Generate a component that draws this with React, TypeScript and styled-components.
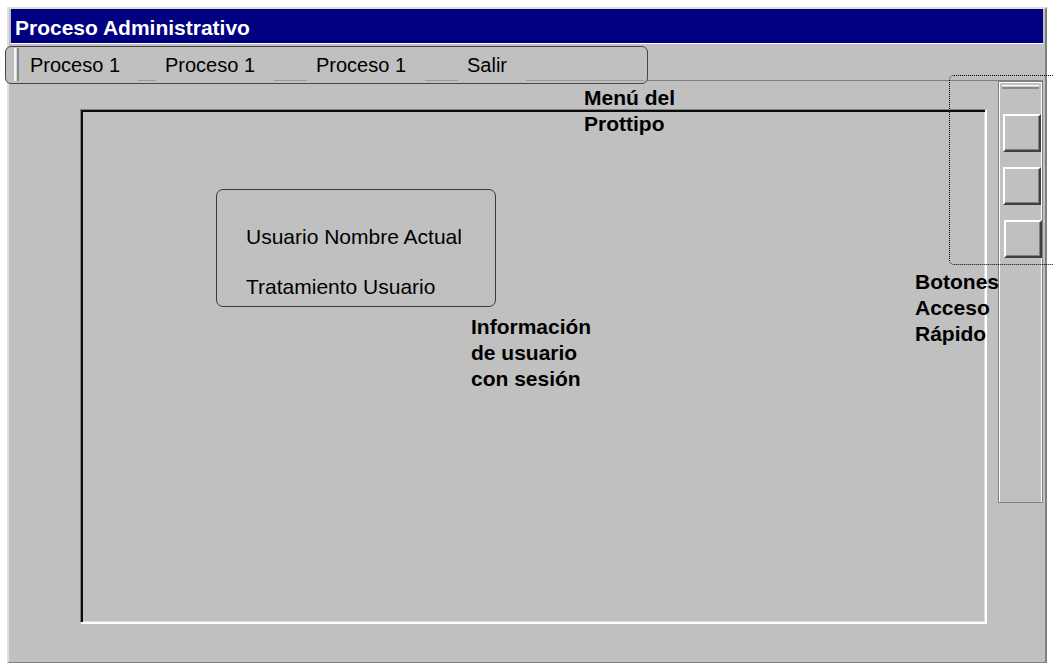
import React from "react";
import styled, { createGlobalStyle } from "styled-components";

const Global = createGlobalStyle`
  html, body { margin: 0; padding: 0; background: #ffffff; overflow: hidden; }
  body { font-family: "Liberation Sans", Arial, sans-serif; color: #000; }
`;

const Window = styled.div`
  position: relative;
  box-sizing: border-box;
  margin: 7px 0 0 7px;
  width: 1040px;
  height: 656px;
  background: #c0c0c0;
  border-style: solid;
  border-width: 2px 2px 1px 2px;
  border-color: #dfdfdf #808080 #808080 #dfdfdf;
  padding: 0 2px;
  display: flex;
  flex-direction: column;
`;

const TitleBar = styled.div`
  box-sizing: border-box;
  height: 34px;
  flex-shrink: 0;
  background: #000080;
  color: #ffffff;
  font-weight: bold;
  font-size: 21px;
  line-height: 31px;
  padding: 3px 0 0 4px;
  white-space: nowrap;
`;

const MenuRow = styled.div`
  box-sizing: border-box;
  height: 38px;
  flex-shrink: 0;
  border-top: 1px solid #ffffff;
  border-bottom: 1px solid #808080;
  display: flex;
  align-items: flex-start;
`;

const MenuBox = styled.nav`
  box-sizing: border-box;
  flex-shrink: 0;
  width: 643px;
  height: 38px;
  margin: 2px 0 0 -6px;
  border: 1px solid #454545;
  border-radius: 6px;
  background: #c0c0c0;
  display: flex;
  align-items: flex-start;
`;

const MenuGrip = styled.div`
  box-sizing: border-box;
  flex-shrink: 0;
  width: 5px;
  height: 33px;
  margin: 1px 0 0 8px;
  border-left: 2px solid #f4f4f4;
  border-right: 2px solid #8c8c8c;
  background: #d6d6d6;
`;

const MenuItem = styled.div<{ $w: number; $pad: number }>`
  box-sizing: border-box;
  flex-shrink: 0;
  width: ${(p) => p.$w}px;
  padding-left: ${(p) => p.$pad}px;
  margin-top: 6px;
  font-size: 20px;
  line-height: 24px;
  white-space: nowrap;
`;

const MenuSep = styled.div<{ $w?: number }>`
  align-self: flex-end;
  height: 1px;
  margin-bottom: 2px;
  background: #9a9a9a;
  ${(p) => (p.$w ? `width: ${p.$w}px; flex-shrink: 0;` : `flex: 1; margin-right: 3px;`)}
`;

const Body = styled.div`
  flex: 1;
  display: flex;
  align-items: flex-start;
`;

const MainPanel = styled.main`
  box-sizing: border-box;
  flex-shrink: 0;
  width: 907px;
  height: 515px;
  margin: 28px 0 0 69px;
  border-style: solid;
  border-width: 1px 2px 2px 1px;
  border-color: #808080 #ffffff #ffffff #808080;
  box-shadow: inset 2px 2px 0 #0a0a0a, inset -1px -1px 0 #dcdcdc;
  padding: 79px 0 0 135px;
`;

const UserBox = styled.section`
  box-sizing: border-box;
  width: 280px;
  height: 118px;
  border: 1px solid #3a3a3a;
  border-radius: 7px;
  padding: 35px 0 0 29px;
  font-size: 21px;
  line-height: 24px;
`;

const UserLine = styled.div<{ $gap?: number }>`
  margin-top: ${(p) => p.$gap ?? 0}px;
  white-space: nowrap;
`;

const Toolbar = styled.aside`
  box-sizing: border-box;
  flex-shrink: 0;
  width: 45px;
  height: 422px;
  margin-left: 11px;
  border: 1px solid #808080;
  box-shadow: inset 1px 1px 0 #ffffff, inset -1px 0 0 #ffffff;
  display: flex;
  flex-direction: column;
  align-items: flex-start;
`;

const ToolGrip = styled.div`
  box-sizing: border-box;
  width: 37px;
  height: 4px;
  margin: 3px 0 0 3px;
  border-top: 1px solid #ffffff;
  border-bottom: 2px solid #8a8a8a;
  background: #cacaca;
`;

const QuickButton = styled.button<{ $top: number; $left: number }>`
  box-sizing: border-box;
  width: 38px;
  height: 38px;
  padding: 0;
  margin: ${(p) => p.$top}px 0 0 ${(p) => p.$left}px;
  background: #c0c0c0;
  border: 2px solid;
  border-color: #ffffff #404040 #404040 #ffffff;
  box-shadow: inset -1px -1px 0 #808080;
  cursor: pointer;
`;

const DottedCallout = styled.div`
  position: absolute;
  left: 940px;
  top: 66px;
  width: 130px;
  height: 190px;
  box-sizing: border-box;
  border: 1px dotted #000000;
  border-radius: 5px;
  pointer-events: none;
`;

const Note = styled.div<{ $x: number; $y: number }>`
  position: absolute;
  left: ${(p) => p.$x}px;
  top: ${(p) => p.$y}px;
  font-size: 21px;
  font-weight: bold;
  line-height: 26px;
  white-space: nowrap;
  color: #000000;
`;

export default function App() {
  return (
    <>
      <Global />
      <Window>
        <TitleBar>Proceso Administrativo</TitleBar>
        <MenuRow>
          <MenuBox>
            <MenuGrip />
            <MenuItem $w={119} $pad={11}>Proceso 1</MenuItem>
            <MenuSep $w={18} />
            <MenuItem $w={118} $pad={9}>Proceso 1</MenuItem>
            <MenuSep $w={33} />
            <MenuItem $w={118} $pad={9}>Proceso 1</MenuItem>
            <MenuSep $w={33} />
            <MenuItem $w={68} $pad={9}>Salir</MenuItem>
            <MenuSep />
          </MenuBox>
        </MenuRow>
        <Body>
          <MainPanel>
            <UserBox>
              <UserLine>Usuario Nombre Actual</UserLine>
              <UserLine $gap={26}>Tratamiento Usuario</UserLine>
            </UserBox>
          </MainPanel>
          <Toolbar>
            <ToolGrip />
            <QuickButton $top={25} $left={4} aria-label="Acceso 1" />
            <QuickButton $top={15} $left={4} aria-label="Acceso 2" />
            <QuickButton $top={15} $left={5} aria-label="Acceso 3" />
          </Toolbar>
        </Body>
        <DottedCallout />
        <Note $x={575} $y={76}>
          Menú del
          <br />
          Prottipo
        </Note>
        <Note $x={462} $y={305}>
          Información
          <br />
          de usuario
          <br />
          con sesión
        </Note>
        <Note $x={906} $y={260}>
          Botones
          <br />
          Acceso
          <br />
          Rápido
        </Note>
      </Window>
    </>
  );
}
